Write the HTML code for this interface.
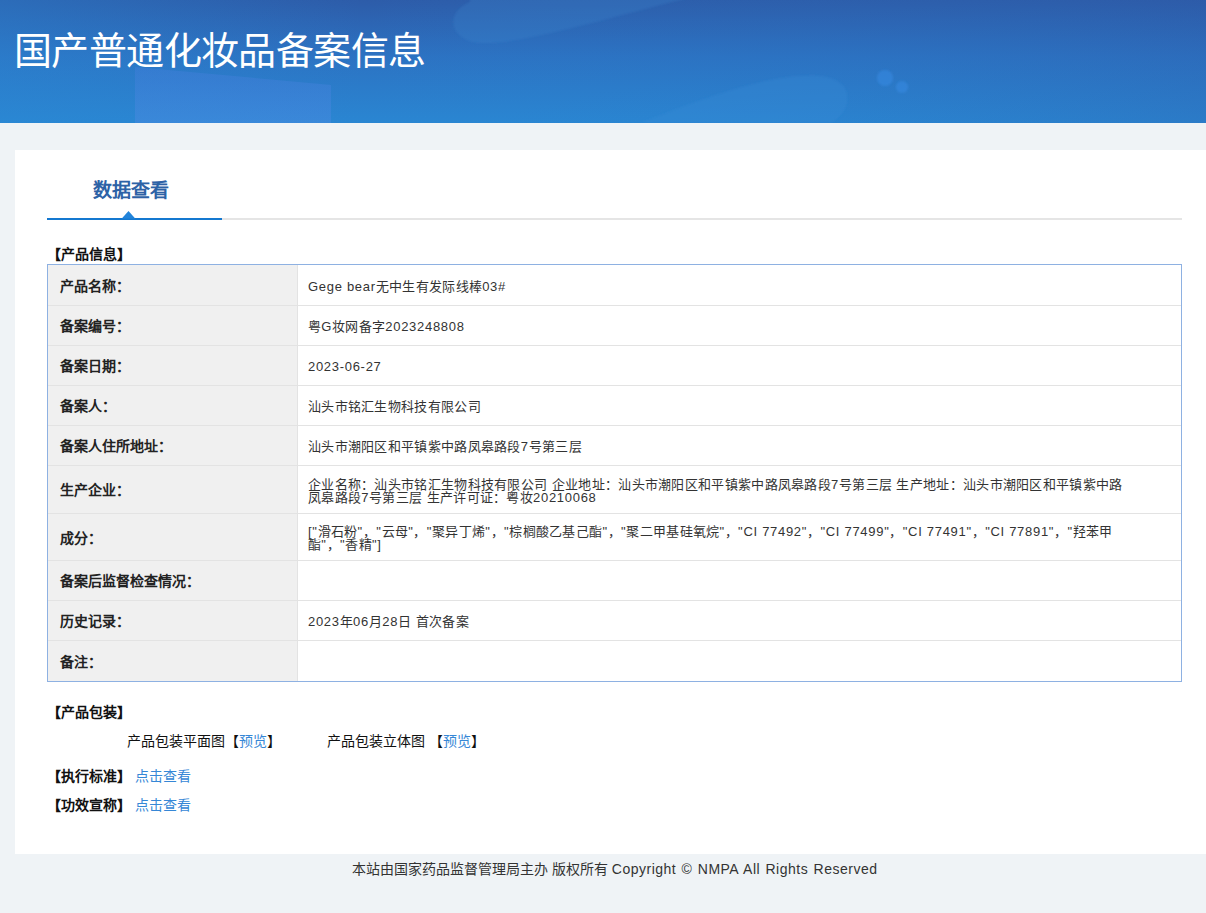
<!DOCTYPE html>
<html lang="zh-CN"><head><meta charset="utf-8">
<style>
*{margin:0;padding:0;box-sizing:border-box}
html,body{width:1206px;height:913px;overflow:hidden;background:#eff3f6;font-family:"Liberation Sans",sans-serif;color:#333;font-size:14px}
.hdr{position:absolute;left:0;top:0;width:1206px;height:123px;overflow:hidden;background:#2c72c2}
.hdr h1{position:absolute;left:14px;top:26px;font-size:38px;letter-spacing:-.6px;font-weight:500;color:#fff;line-height:50px;white-space:nowrap}
.card{position:absolute;left:15px;top:150px;width:1200px;height:704px;background:#fff}
.tab{position:absolute;left:93px;top:177px;font-size:19px;font-weight:bold;color:#2d62a6;line-height:28px}
.tabline{position:absolute;left:47px;top:218px;width:175px;height:2px;background:#1478d0}
.grayline{position:absolute;left:222px;top:218px;width:960px;height:2px;background:#e5e5e5}
.tri{position:absolute;left:120px;top:211px}
.sec{position:absolute;left:47px;font-size:14px;font-weight:bold;color:#111;line-height:20px;white-space:nowrap}
table{position:absolute;left:47px;top:264px;width:1135px;border-collapse:separate;border-spacing:0;border:1px solid #8eb1e2}
tr:first-child td{border-top:0}
td{border-top:1px solid #e3e3e3;font-size:13px;line-height:13px;vertical-align:middle}
td.l{width:250px;background:#f0f0f0;font-weight:bold;padding-left:12px;padding-top:2px;font-size:14px;border-right:1px solid #e3e3e3;color:#222}
td.v{padding-left:10px;padding-right:20px;padding-top:2px;color:#333;letter-spacing:.3px}
a{color:#3687d6;text-decoration:none}
.e{letter-spacing:.7px}
.foot{position:absolute;left:352px;top:859px;white-space:nowrap;font-size:14px;color:#333;line-height:20px}
</style></head><body>
<div class="hdr"><svg width="1206" height="123" style="position:absolute;left:0;top:0">
<defs>
<linearGradient id="gv" x1="0" y1="0" x2="0" y2="1">
<stop offset="0" stop-color="#2d5ca9"/><stop offset="0.45" stop-color="#2c72c2"/><stop offset="1" stop-color="#2a86d2"/></linearGradient>
<linearGradient id="gh" x1="0" y1="0" x2="1" y2="0">
<stop offset="0" stop-color="#2a8ad6" stop-opacity="0.35"/><stop offset="0.3" stop-color="#2a8ad6" stop-opacity="0"/><stop offset="1" stop-color="#2e5aa8" stop-opacity="0.25"/></linearGradient>
<linearGradient id="gt" x1="0" y1="0" x2="0" y2="1"><stop offset="0" stop-color="#4a7fe0" stop-opacity="0.32"/><stop offset="1" stop-color="#4a8ae0" stop-opacity="0.5"/></linearGradient>
<filter id="bl"><feGaussianBlur stdDeviation="1.2"/></filter>
<filter id="bl3"><feGaussianBlur stdDeviation="3"/></filter>
</defs>
<rect width="1206" height="123" fill="url(#gv)"/>
<rect width="1206" height="123" fill="url(#gh)"/>
<polygon points="135,67 331,85 331,123 135,123" fill="url(#gt)"/>
<path d="M470,2 C445,12 448,40 480,43 C520,45 600,20 700,-5 L470,-5 Z" fill="#3a86cf" fill-opacity="0.25" filter="url(#bl)"/>
<path d="M640,123 C700,100 770,72 820,76 C860,80 850,115 830,123 Z" fill="#3a8ad6" fill-opacity="0.3" filter="url(#bl)"/>
<circle cx="885" cy="78" r="8" fill="#3a8ee8" fill-opacity="0.5" filter="url(#bl)"/>
<circle cx="902" cy="87" r="6" fill="#3a8ee8" fill-opacity="0.5" filter="url(#bl)"/>
</svg><h1>国产普通化妆品备案信息</h1></div>
<div class="card"></div>
<div class="tab">数据查看</div>
<div class="tabline"></div><div class="grayline"></div><svg class="tri" width="16" height="8" viewBox="0 0 16 8"><polygon points="1.8,7.5 8.5,0 15.2,7.5" fill="#2284da"/></svg>
<div class="sec" style="top:244px">【产品信息】</div>
<table>
<tr style="height:40px"><td class="l">产品名称：</td><td class="v"><span class="e">Gege bear</span>无中生有发际线棒<span class="e">03#</span></td></tr>
<tr style="height:40px"><td class="l">备案编号：</td><td class="v">粤<span class="e">G</span>妆网备字<span class="e">2023248808</span></td></tr>
<tr style="height:40px"><td class="l">备案日期：</td><td class="v"><span class="e">2023-06-27</span></td></tr>
<tr style="height:40px"><td class="l">备案人：</td><td class="v">汕头市铭汇生物科技有限公司</td></tr>
<tr style="height:40px"><td class="l">备案人住所地址：</td><td class="v">汕头市潮阳区和平镇紫中路凤皋路段<span class="e">7</span>号第三层</td></tr>
<tr style="height:48px"><td class="l">生产企业：</td><td class="v">企业名称：汕头市铭汇生物科技有限公司<span class="e"> </span>企业地址：汕头市潮阳区和平镇紫中路凤皋路段<span class="e">7</span>号第三层<span class="e"> </span>生产地址：汕头市潮阳区和平镇紫中路<br>凤皋路段<span class="e">7</span>号第三层<span class="e"> </span>生产许可证：粤妆<span class="e">20210068</span></td></tr>
<tr style="height:47px"><td class="l">成分：</td><td class="v"><span class="e">["</span>滑石粉<span class="e">"</span>，<span class="e">"</span>云母<span class="e">"</span>，<span class="e">"</span>聚异丁烯<span class="e">"</span>，<span class="e">"</span>棕榈酸乙基己酯<span class="e">"</span>，<span class="e">"</span>聚二甲基硅氧烷<span class="e">"</span>，<span class="e">"</span><span class="e">CI 77492</span><span class="e">"</span>，<span class="e">"</span><span class="e">CI 77499</span><span class="e">"</span>，<span class="e">"</span><span class="e">CI 77491</span><span class="e">"</span>，<span class="e">"</span><span class="e">CI 77891</span><span class="e">"</span>，<span class="e">"</span>羟苯甲<br>酯<span class="e">"</span>，<span class="e">"</span>香精<span class="e">"]</span></td></tr>
<tr style="height:40px"><td class="l">备案后监督检查情况：</td><td class="v"></td></tr>
<tr style="height:40px"><td class="l">历史记录：</td><td class="v"><span class="e">2023</span>年<span class="e">06</span>月<span class="e">28</span>日<span class="e"> </span>首次备案</td></tr>
<tr style="height:41px"><td class="l">备注：</td><td class="v"></td></tr>
</table>
<div class="sec" style="top:702px">【产品包装】</div>
<div class="sec" style="top:731px;left:127px;font-weight:normal">产品包装平面图【<a>预览</a>】</div>
<div class="sec" style="top:731px;left:327px;font-weight:normal">产品包装立体图 【<a>预览</a>】</div>
<div class="sec" style="top:766px">【执行标准】 <a style="font-weight:normal">点击查看</a></div>
<div class="sec" style="top:795px">【功效宣称】 <a style="font-weight:normal">点击查看</a></div>
<div class="foot">本站由国家药品监督管理局主办 版权所有 <span style="letter-spacing:.5px;word-spacing:1px">Copyright © NMPA All Rights Reserved</span></div>
</body></html>
